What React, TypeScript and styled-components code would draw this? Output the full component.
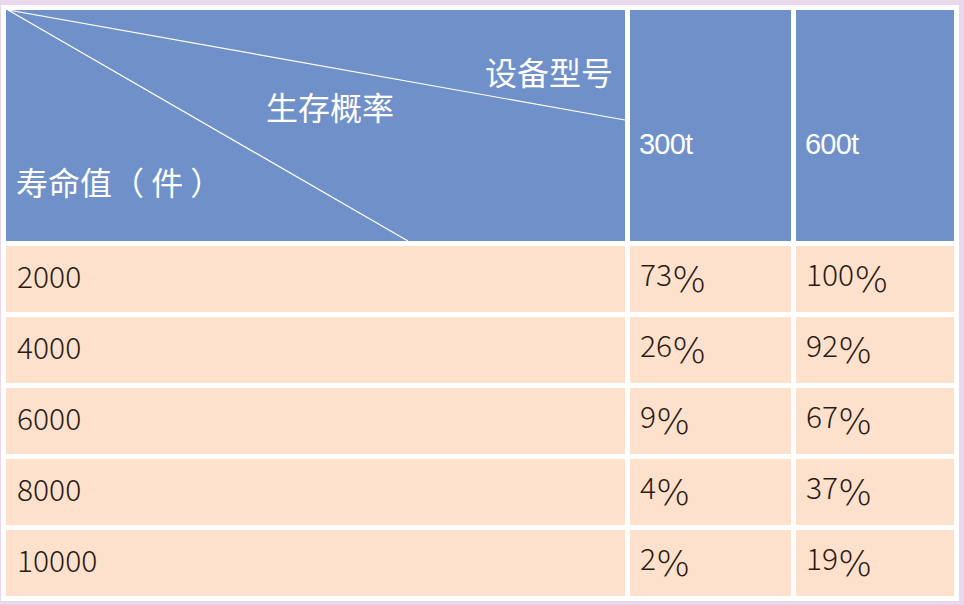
import React from 'react';
import styled, { createGlobalStyle } from 'styled-components';

const GlobalStyle = createGlobalStyle`
  html, body {
    margin: 0;
    padding: 0;
    background: #e9d7ec;
  }
  body {
    width: 964px;
    height: 605px;
    overflow: hidden;
    font-family: "Noto Sans CJK SC", "Noto Sans", sans-serif;
  }
`;

const Frame = styled.div`
  margin: 5px 0 0 1px;
  width: 958px;
  box-sizing: border-box;
  padding: 5px;
  background: #ffffff;
  display: grid;
  grid-template-columns: 619px 161px 158px;
  grid-template-rows: 231px repeat(5, 66px);
  gap: 5px;
`;

const CornerCell = styled.div`
  position: relative;
  background: #6f90c8;
  display: flex;
  flex-direction: column;
  padding: 45px 12px 0 10px;
  color: #ffffff;
  overflow: hidden;
`;

const Diagonals = styled.svg`
  position: absolute;
  inset: 0;
  width: 100%;
  height: 100%;
`;

const CornerLabel = styled.span<{ $align: 'start' | 'end'; $top?: number; $left?: number }>`
  position: relative;
  align-self: ${(p) => (p.$align === 'end' ? 'flex-end' : 'flex-start')};
  margin-top: ${(p) => p.$top ?? 0}px;
  margin-left: ${(p) => p.$left ?? 0}px;
  font-size: 32px;
  line-height: 1;
  white-space: pre;
`;

const HeadCell = styled.div`
  background: #6f90c8;
  color: #ffffff;
  display: flex;
  align-items: center;
  padding: 38px 0 0 9px;
  font-family: "Liberation Sans", Arial, sans-serif;
  font-size: 29px;
  letter-spacing: -0.8px;
`;

const BodyCell = styled.div<{ $first?: boolean }>`
  background: #fde1cc;
  color: #2b1a12;
  display: flex;
  align-items: center;
  padding: 0 0 8px ${(p) => (p.$first ? 11 : 10)}px;
  font-family: "Noto Sans CJK SC", "Noto Sans", sans-serif;
  font-weight: 300;
  font-size: 30px;
  line-height: 40px;
  white-space: pre;
`;

const Value = styled.span`
  line-height: 40px;
`;

const Pct = styled.span`
  font-family: "DejaVu Sans", sans-serif;
  font-weight: 200;
  font-size: 36px;
  line-height: 1;
  vertical-align: -6px;
  margin-left: 0;
`;

const rows = [
  { life: '2000', a: '73', b: '100' },
  { life: '4000', a: '26', b: '92' },
  { life: '6000', a: '9', b: '67' },
  { life: '8000', a: '4', b: '37' },
  { life: '10000', a: '2', b: '19' },
];

export default function App() {
  return (
    <>
      <GlobalStyle />
      <Frame>
        <CornerCell>
          <Diagonals viewBox="0 0 619 231" preserveAspectRatio="none">
            <line x1="2" y1="0" x2="619" y2="110" stroke="#ffffff" strokeWidth="1.2" />
            <line x1="2" y1="0" x2="402" y2="231" stroke="#ffffff" strokeWidth="1.2" />
          </Diagonals>
          <CornerLabel $align="end">设备型号</CornerLabel>
          <CornerLabel $align="start" $top={3} $left={250}>生存概率</CornerLabel>
          <CornerLabel $align="start" $top={43}>寿命值（ 件 ）</CornerLabel>
        </CornerCell>
        <HeadCell>300t</HeadCell>
        <HeadCell>600t</HeadCell>
        {rows.map((r) => (
          <React.Fragment key={r.life}>
            <BodyCell $first>{r.life}</BodyCell>
            <BodyCell><Value>{r.a}<Pct>%</Pct></Value></BodyCell>
            <BodyCell><Value>{r.b}<Pct>%</Pct></Value></BodyCell>
          </React.Fragment>
        ))}
      </Frame>
    </>
  );
}
